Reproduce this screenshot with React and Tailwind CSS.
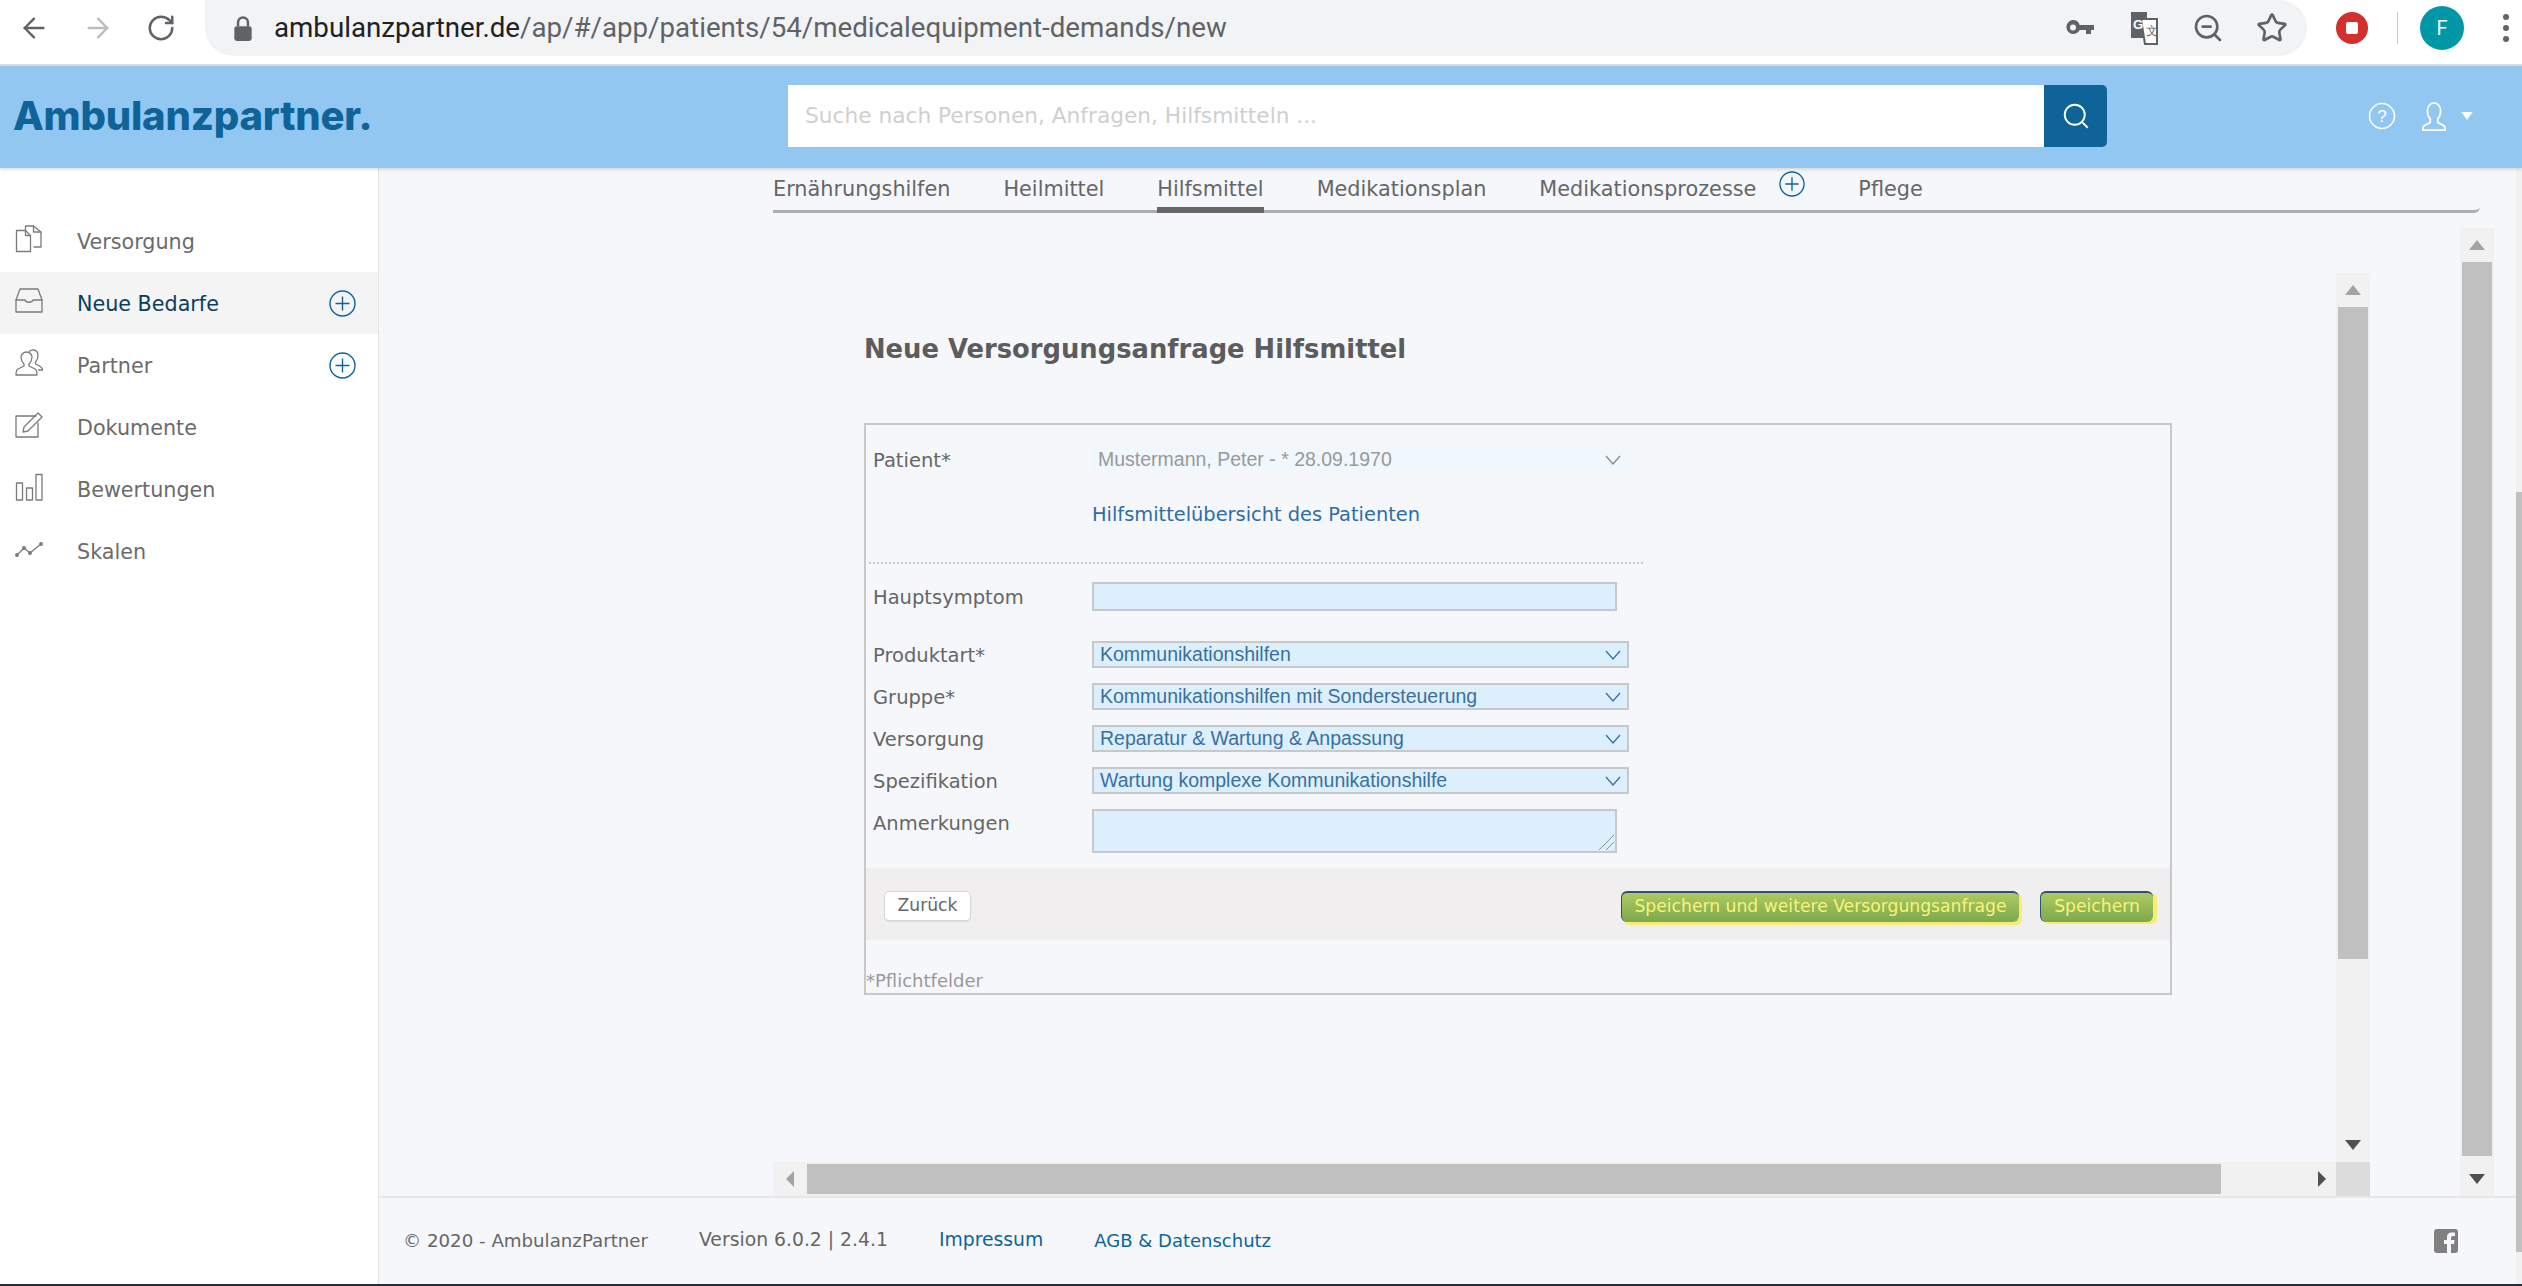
import { ArrowLeft, ArrowRight, RotateCw, Search, Star, ZoomOut } from 'lucide-react'

// ─── Icons ────────────────────────────────────────────────────────────────────

function NavIcon({ children }) {
  return (
    <svg className="w-7 h-7 shrink-0 -mt-1" viewBox="0 0 28 28" fill="none" stroke="#7b7b7b" strokeWidth="1.3" strokeLinejoin="round" strokeLinecap="round">
      {children}
    </svg>
  )
}

const docsIcon = (
  <NavIcon>
    <path d="M1.5 5.5h9l5 5v16h-14z" />
    <path d="M10.5 5.5v5h5" />
    <path d="M10.5 5V1h8l7.5 6v15h-7" />
    <path d="M18.5 1v6h7" />
  </NavIcon>
)
const inboxIcon = (
  <NavIcon>
    <path d="M5 2h18l4 11v12H1V13z" />
    <path d="M1 13h9c1 3 7 3 8 0h9" />
  </NavIcon>
)
const usersIcon = (
  <NavIcon>
    <path d="M9 15c-2-2-3-4-3-7 0-3 3-5 5.500-5s5.500 2 5.500 5c0 3-1 5-3 7v2l6 3c2 1 2 3 2 6H1c0-3 0-5 2-6l6-3z" />
    <path d="M14 3c1-2 3-2.500 5-2 3 .5 4 3 4 5.500 0 3-1 5-2.500 6.500v2l4 2c2 1 3 2 3 4h-4" />
  </NavIcon>
)
const editIcon = (
  <NavIcon>
    <path d="M21 5H1v21h22V12" />
    <path d="M9 16l-1 5 5-1L27 6l-4-4z" />
  </NavIcon>
)
const barsIcon = (
  <NavIcon>
    <rect x="1.500" y="10" width="6" height="17" />
    <rect x="11.500" y="15" width="6" height="12" />
    <rect x="21" y="1.500" width="6" height="25.500" />
  </NavIcon>
)
const lineIcon = (
  <NavIcon>
    <path d="M2 20l7-7 6 5 11-9" />
    <circle cx="2" cy="20" r="1.300" fill="#7b7b7b" />
    <circle cx="9" cy="13" r="1.300" fill="#7b7b7b" />
    <circle cx="15" cy="18" r="1.300" fill="#7b7b7b" />
    <circle cx="26" cy="9" r="1.300" fill="#7b7b7b" />
  </NavIcon>
)

function PlusCircle({ size = 'w-[27px] h-[27px]' }) {
  return (
    <svg className={`${size} shrink-0`} viewBox="0 0 27 27" fill="none" stroke="#0e6499" strokeWidth="1.400">
      <circle cx="13.500" cy="13.500" r="12.500" />
      <path d="M13.500 6.500v14M6.500 13.500h14" />
    </svg>
  )
}

function Chevron({ color = '#3b6f9e' }) {
  return (
    <svg className="w-4 h-[10px] absolute right-[8px] top-1/2 -translate-y-1/2 pointer-events-none" viewBox="0 0 16 10" fill="none" stroke={color} strokeWidth="1.300">
      <path d="M1 1l7 8 7-8" />
    </svg>
  )
}

function Arrow({ dir, color = '#505050' }) {
  const points = {
    up: '0,10 16,10 8,0',
    down: '0,0 16,0 8,10',
  }
  return (
    <svg className="w-4 h-[10px]" viewBox="0 0 16 10">
      <polygon points={points[dir]} fill={color} />
    </svg>
  )
}

function ArrowSide({ dir, color }) {
  return (
    <svg className="w-2 h-4" viewBox="0 0 8 16">
      <polygon points={dir === 'left' ? '8,0 8,16 0,8' : '0,0 0,16 8,8'} fill={color} />
    </svg>
  )
}

// ─── Scrollbars ───────────────────────────────────────────────────────────────

function VScroll({ thumb, className }) {
  return (
    <div className={`w-[34px] bg-[#f1f1f1] flex flex-col items-center ${className}`}>
      <div className="h-[34px] w-full flex items-center justify-center">
        <Arrow dir="up" color="#a3a3a3" />
      </div>
      <div className={`w-[30px] bg-[#c0c0c0] ${thumb}`} />
      <div className="flex-1" />
      <div className="h-[34px] w-full flex items-center justify-center">
        <Arrow dir="down" />
      </div>
    </div>
  )
}

// ─── Form pieces ──────────────────────────────────────────────────────────────

function Row({ label, children, className = 'items-center' }) {
  return (
    <div className={`flex ${className}`}>
      <label className="w-[226px] shrink-0 pl-[7px] pt-[2px] text-[19.500px] leading-[25px] text-[#666]">{label}</label>
      {children}
    </div>
  )
}

function Select({ value }) {
  return (
    <div className="relative w-[537px] h-[27px]">
      <select
        defaultValue={value}
        className="w-full h-full appearance-none bg-[#dbf0fc] border-2 border-[#c8c8c8] pl-[6px] pt-[1px] text-[19.500px] leading-none text-[#3b6f9e] font-['Liberation_Sans',sans-serif] outline-none"
      >
        <option>{value}</option>
      </select>
      <Chevron />
    </div>
  )
}

const rows = [
  ['Produktart*', 'Kommunikationshilfen'],
  ['Gruppe*', 'Kommunikationshilfen mit Sondersteuerung'],
  ['Versorgung', 'Reparatur & Wartung & Anpassung'],
  ['Spezifikation', 'Wartung komplexe Kommunikationshilfe'],
]

const navItems = [
  ['Versorgung', docsIcon],
  ['Neue Bedarfe', inboxIcon, true, true],
  ['Partner', usersIcon, true],
  ['Dokumente', editIcon],
  ['Bewertungen', barsIcon],
  ['Skalen', lineIcon],
]

const tabs = ['Ernährungshilfen', 'Heilmittel', 'Hilfsmittel', 'Medikationsplan', 'Medikationsprozesse', 'Pflege']

// ─── Page ─────────────────────────────────────────────────────────────────────

export default function App() {
  return (
    <div className="w-[2522px] h-[1286px] flex flex-col overflow-hidden bg-white font-['DejaVu_Sans',sans-serif]">

      {/* ── Browser toolbar ────────────────────────────────────────────── */}
      <div className="h-[66px] shrink-0 border-b-2 border-[#dcdcdc] flex items-start">
        <div className="w-[205px] h-[56px] shrink-0 flex items-center gap-[32px] pl-[18px]">
          <ArrowLeft className="w-8 h-8 text-[#5f6368]" strokeWidth={1.800} />
          <ArrowRight className="w-8 h-8 text-[#bdbdbd]" strokeWidth={1.800} />
          <RotateCw className="w-[30px] h-[30px] text-[#5f6368]" strokeWidth={2} />
        </div>
        <div className="w-[2102px] h-[56px] shrink-0 bg-[#f1f3f4] rounded-r-[28px] rounded-bl-[28px] flex items-center pl-[28px] pr-[19px]">
          <svg className="w-5 h-[26px] mr-[21px] shrink-0" viewBox="0 0 16 21" fill="#5f6368">
            <path d="M3 9V6a5 5 0 0110 0v3h-2V6a3 3 0 00-6 0v3z" />
            <rect x="1" y="9" width="14" height="12" rx="2" />
          </svg>
          <span className="text-[27.700px] font-['Roboto',sans-serif] text-[#5f6368] whitespace-nowrap">
            <span className="text-[#202124]">ambulanzpartner.de</span>/ap/#/app/patients/54/medicalequipment-demands/new
          </span>
          <div className="ml-auto flex items-center gap-[32px]">
            <span className="w-8 flex justify-center">
              <svg className="w-7 h-4" viewBox="0 0 28 16" fill="#5f6368">
                <path d="M7 0a7 7 0 016.700 5H28v5h-3v4h-5v-4h-6.300A7 7 0 117 0zm0 4.500a3 3 0 100 6 3 3 0 000-6z" />
              </svg>
            </span>
            <span className="w-8 flex justify-center">
              <svg className="w-7 h-[34px]" viewBox="0 0 28 34">
                <rect x="1" y="1" width="16" height="26" fill="#5f6368" />
                <path d="M11 8h16v25H15z" fill="#fff" stroke="#5f6368" strokeWidth="2" />
                <text x="3" y="18" fontSize="13" fontWeight="700" fill="#fff" fontFamily="Liberation Sans">G</text>
                <text x="16" y="24" fontSize="12" fill="#5f6368" fontFamily="Liberation Sans">文</text>
              </svg>
            </span>
            <ZoomOut className="w-8 h-8 text-[#5f6368]" strokeWidth={2} />
            <Star className="w-8 h-8 text-[#5f6368]" strokeWidth={2} />
          </div>
        </div>
        <div className="flex-1 h-[56px] flex items-center pl-[29px]">
          <div className="w-8 h-8 rounded-full bg-[#d32f2f] flex items-center justify-center">
            <div className="w-[12px] h-[12px] bg-white rounded-[2px]" />
          </div>
          <div className="w-px h-8 bg-[#c8c8c8] ml-[29px] mr-[22px]" />
          <div className="w-[44px] h-[44px] rounded-full bg-[#0097a7] flex items-center justify-center text-white text-[20px] font-['Roboto',sans-serif]">F</div>
          <div className="ml-[39px] flex flex-col gap-[5px]">
            <div className="w-[6px] h-[6px] rounded-full bg-[#5f6368]" />
            <div className="w-[6px] h-[6px] rounded-full bg-[#5f6368]" />
            <div className="w-[6px] h-[6px] rounded-full bg-[#5f6368]" />
          </div>
        </div>
      </div>

      {/* ── App header ─────────────────────────────────────────────────── */}
      <header className="h-[102px] shrink-0 bg-[#92c7f1] shadow-[0_2px_3px_rgba(0,0,0,0.12)] z-10 flex items-center pl-[13px] pr-[6px]">
        <span className="w-[775px] shrink-0 text-[40px] font-extrabold tracking-[-0.200px] text-[#0e6499] font-['Inter',sans-serif] -mt-[2px]">Ambulanzpartner.</span>
        <div className="w-[1319px] h-[62px] shrink-0 flex -mt-[2px]">
          <div className="flex-1 bg-white pl-[17px] flex items-center text-[21.700px] text-[#cfcfcf]">
            Suche nach Personen, Anfragen, Hilfsmitteln ...
          </div>
          <div className="w-[63px] bg-[#0e6499] rounded-r-[5px] flex items-center justify-center">
            <Search className="w-[30px] h-[30px] text-white" strokeWidth={1.500} />
          </div>
        </div>
        <div className="flex items-center ml-[261px] -mt-[2px] text-white">
          <svg className="w-[28px] h-[28px]" viewBox="0 0 28 28" fill="none" stroke="#fff" strokeWidth="1.500">
            <circle cx="14" cy="14" r="12.500" />
            <text x="14" y="20" fontSize="17" textAnchor="middle" fill="#fff" stroke="none" fontFamily="Liberation Sans">?</text>
          </svg>
          <svg className="w-[28px] h-[30px] ml-[24px]" viewBox="0 0 28 32" fill="none" stroke="#fff" strokeWidth="1.800">
            <path d="M10 19c-2-2-3-5-3-9 0-4 3-8 7-8s7 4 7 8c0 4-1 7-3 9v4l6 3c1 .5 2 2 2 5H2c0-3 1-4.500 2-5l6-3z" />
          </svg>
          <svg className="w-[12px] h-[8px] ml-[13px]" viewBox="0 0 10 7">
            <polygon points="0,0 10,0 5,7" fill="#fff" />
          </svg>
        </div>
      </header>

      <div className="flex-1 min-h-0 flex">

        {/* ── Sidebar ──────────────────────────────────────────────────── */}
        <aside className="w-[379px] shrink-0 bg-white border-r border-[#e3e3e3] pt-[42px]">
          {navItems.map(([label, icon, plus, active]) => (
            <div key={label} className={`h-[62px] flex items-center pl-[15px] pr-[22px] ${active ? 'bg-[#f4f4f4]' : ''}`}>
              {icon}
              <span className={`ml-[34px] flex-1 mt-[4px] text-[20.700px] ${active ? 'text-[#0b3f5f]' : 'text-[#6b6b6b]'}`}>{label}</span>
              {plus && <PlusCircle />}
            </div>
          ))}
        </aside>

        {/* ── Main ─────────────────────────────────────────────────────── */}
        <main className="flex-1 min-w-0 bg-[#f5f7fb] flex flex-col">
          <div className="flex-1 min-h-0 flex flex-col pl-[394px] pr-[36px]">

            {/* Tabs */}
            <nav className="h-[45px] shrink-0 border-b-[3px] border-[#adadad] rounded-br-[6px] flex items-start gap-[53px] pt-[6px] text-[20.800px] text-[#666]">
              {tabs.map((tab) => (
                <div key={tab} className="relative h-[38px] flex items-start whitespace-nowrap">
                  <span>{tab}</span>
                  {tab === 'Medikationsprozesse' && (
                    <span className="ml-[23px] -mt-[3px]"><PlusCircle size="w-[26px] h-[26px]" /></span>
                  )}
                  {tab === 'Hilfsmittel' && <span className="absolute left-0 right-0 top-[33px] h-[6px] bg-[#666]" />}
                </div>
              ))}
            </nav>

            <div className="flex-1 min-h-0 flex pt-[15px] pr-[2px]">
              <div className="w-[1597px] shrink-0 flex flex-col pt-[45px]">
                <div className="flex-1 min-h-0 flex">

                  {/* Form area */}
                  <div className="flex-1 min-w-0 pl-[91px] pt-[59px]">
                    <h1 className="text-[25.800px] leading-[34px] font-bold text-[#5c5c5c]">Neue Versorgungsanfrage Hilfsmittel</h1>

                    <div className="mt-[57px] w-[1308px] h-[572px] border-2 border-[#c8c8c8] flex flex-col">
                      <div className="mt-[21px]">
                        <Row label="Patient*">
                          <div className="relative w-[537px] h-[24px] bg-[#f0f7fd] pl-[6px] flex items-center text-[19.500px] text-[#999] font-['Liberation_Sans',sans-serif]">
                            Mustermann, Peter - * 28.09.1970
                            <Chevron color="#8a8a8a" />
                          </div>
                        </Row>
                      </div>
                      <a className="mt-[30px] ml-[226px] text-[19.400px] leading-6 text-[#2e6da4]">Hilfsmittelübersicht des Patienten</a>
                      <div className="mt-[35px] ml-[3px] w-[774px] border-t-2 border-dotted border-[#c8c8c8]" />

                      <div className="mt-[18px]">
                        <Row label="Hauptsymptom">
                          <input className="w-[525px] h-[29px] bg-[#dbf0fc] border-2 border-[#c8c8c8] outline-none" />
                        </Row>
                      </div>

                      <div className="mt-[30px] flex flex-col gap-[15px]">
                        {rows.map(([label, value]) => (
                          <Row key={label} label={label}>
                            <Select value={value} />
                          </Row>
                        ))}
                        <Row label="Anmerkungen" className="items-start">
                          <div className="relative w-[525px] h-[44px]">
                            <textarea className="block w-full h-full resize-none bg-[#dbf0fc] border-2 border-[#c8c8c8] outline-none" />
                            <svg className="absolute right-[3px] bottom-[3px] w-4 h-4 pointer-events-none" viewBox="0 0 16 16" fill="none" stroke="#777" strokeWidth="0.800">
                              <path d="M1 16L16 1M8 16l8-8" />
                            </svg>
                          </div>
                        </Row>
                      </div>

                      <div className="mt-[15px] h-[72px] bg-[#f0eeee] flex items-center pl-[18px] pr-[17px] pt-[4px]">
                        <button className="w-[87px] h-[30px] bg-white border border-[#d6d6d6] rounded-[5px] text-[17.200px] text-[#666] shadow-[0_1px_1px_rgba(0,0,0,0.08)]">Zurück</button>
                        <button className="ml-auto w-[398px] h-[31px] rounded-[6px] bg-gradient-to-b from-[#afca60] to-[#7ca84e] border-t-2 border-l border-[#27546f] text-[17.200px] text-[#f6f47c] shadow-[3px_3px_0_#f6ee6e] whitespace-nowrap">Speichern und weitere Versorgungsanfrage</button>
                        <button className="ml-[21px] w-[113px] h-[31px] rounded-[6px] bg-gradient-to-b from-[#afca60] to-[#7ca84e] border-t-2 border-l border-[#27546f] text-[17.200px] text-[#f6f47c] shadow-[4px_2px_0_#f6ee6e]">Speichern</button>
                      </div>

                      <div className="mt-auto text-[18px] leading-6 text-[#999]">*Pflichtfelder</div>
                    </div>
                  </div>

                  <VScroll className="shrink-0" thumb="h-[652px]" />
                </div>

                {/* Horizontal scrollbar */}
                <div className="h-[34px] shrink-0 flex">
                  <div className="flex-1 bg-[#f1f1f1] flex items-center">
                    <div className="w-[34px] flex justify-center"><ArrowSide dir="left" color="#a3a3a3" /></div>
                    <div className="w-[1414px] h-[30px] bg-[#c0c0c0]" />
                    <div className="flex-1 flex justify-end pr-[10px]"><ArrowSide dir="right" color="#505050" /></div>
                  </div>
                  <div className="w-[34px] bg-[#dcdcdc]" />
                </div>
              </div>

              <VScroll className="ml-[90px] shrink-0" thumb="h-[894px]" />
            </div>
          </div>

          {/* Footer */}
          <footer className="h-[88px] shrink-0 border-t-2 border-[#e6e6e6] flex items-center pl-[24px] pr-[58px] pb-[1px] text-[18.200px] text-[#666]">
            <span>© 2020 - AmbulanzPartner</span>
            <span className="ml-[51px] text-[18.800px]">Version 6.0.2 | 2.4.1</span>
            <a className="ml-[51px] text-[18.800px] text-[#0e6499]">Impressum</a>
            <a className="ml-[51px] text-[18px] text-[#0e6499]">AGB &amp; Datenschutz</a>
            <svg className="ml-auto w-6 h-6" viewBox="0 0 24 24">
              <path d="M3 0h18a3 3 0 013 3v18a3 3 0 01-3 3h-4v-9h3l.5-4H17V9c0-1 .5-2 2-2h2V3.500h-3c-3.500 0-5 2-5 5V11h-3v4h3v9H3a3 3 0 01-3-3V3a3 3 0 013-3z" fill="#808080" />
            </svg>
          </footer>
        </main>

        {/* Page scrollbar */}
        <div className="w-[6px] shrink-0 bg-[#f1f1f1] flex flex-col">
          <div className="h-[324px]" />
          <div className="h-[760px] bg-[#c0c0c0]" />
        </div>
      </div>

      <div className="h-[2px] shrink-0 bg-[#1f3038]" />
    </div>
  )
}
